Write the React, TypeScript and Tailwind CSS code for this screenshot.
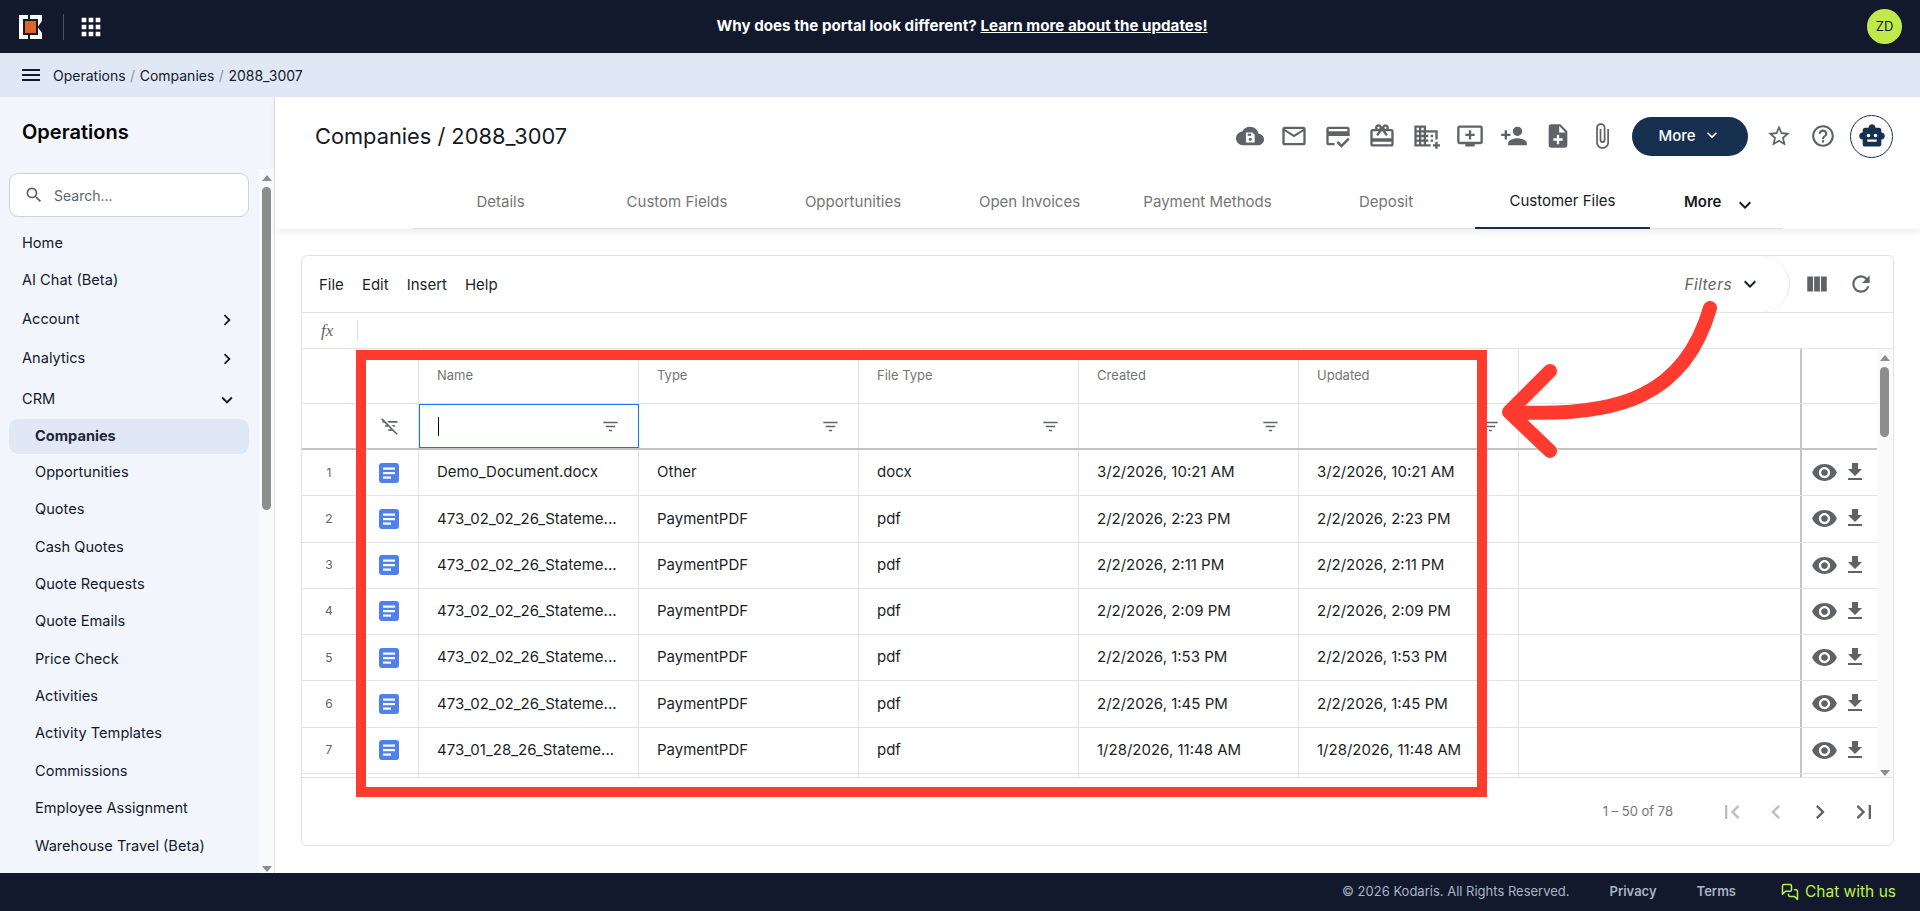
import React from "react";
import {
  MdApps,
  MdChevronLeft,
  MdChevronRight,
  MdExpandMore,
  MdFileDownload,
  MdFilterList,
  MdFilterListOff,
  MdFirstPage,
  MdHelpOutline,
  MdLastPage,
  MdMailOutline,
  MdMenu,
  MdNoteAdd,
  MdOutlineAddToQueue,
  MdOutlineAttachFile,
  MdOutlineCardGiftcard,
  MdOutlineCreditScore,
  MdOutlineDomainAdd,
  MdPersonAdd,
  MdRefresh,
  MdSearch,
  MdSmartToy,
  MdStarBorder,
  MdViewColumn,
  MdVisibility,
} from "react-icons/md";
import { LuMessagesSquare } from "react-icons/lu";

const navTop = ["Home", "AI Chat (Beta)"];
const navGroups = ["Account", "Analytics"];
const crmItems = [
  "Opportunities",
  "Quotes",
  "Cash Quotes",
  "Quote Requests",
  "Quote Emails",
  "Price Check",
  "Activities",
  "Activity Templates",
  "Commissions",
  "Employee Assignment",
  "Warehouse Travel (Beta)",
];

const tabs = [
  { label: "Details", width: "w-[177px]" },
  { label: "Custom Fields", width: "w-[176px]" },
  { label: "Opportunities", width: "w-[176px]" },
  { label: "Open Invoices", width: "w-[177px]" },
  { label: "Payment Methods", width: "w-[179px]" },
  { label: "Deposit", width: "w-[178px]" },
];

const files = [
  ["Demo_Document.docx", "Other", "docx", "3/2/2026, 10:21 AM"],
  ["473_02_02_26_Stateme...", "PaymentPDF", "pdf", "2/2/2026, 2:23 PM"],
  ["473_02_02_26_Stateme...", "PaymentPDF", "pdf", "2/2/2026, 2:11 PM"],
  ["473_02_02_26_Stateme...", "PaymentPDF", "pdf", "2/2/2026, 2:09 PM"],
  ["473_02_02_26_Stateme...", "PaymentPDF", "pdf", "2/2/2026, 1:53 PM"],
  ["473_02_02_26_Stateme...", "PaymentPDF", "pdf", "2/2/2026, 1:45 PM"],
  ["473_01_28_26_Stateme...", "PaymentPDF", "pdf", "1/28/2026, 11:48 AM"],
];

const Logo = () => (
  <svg width="24" height="24" viewBox="0 0 24 24">
    <path fill="#fff" d="M0 0h9v4H4v16h5v4H0z" />
    <path fill="#fff" d="M11 0h12v6l-4 5.5V4h-8z" />
    <path fill="#fff" d="M11 24h12v-6l-4-5.5V20h-8z" />
    <rect x="6" y="6" width="11" height="12" fill="#e0642a" />
  </svg>
);

const CloudSave = () => (
  <svg width="28" height="28" viewBox="0 0 24 24">
    <path
      fill="#5f6368"
      d="M19.35 10.04C18.67 6.59 15.64 4 12 4 9.11 4 6.6 5.64 5.35 8.04 2.34 8.36 0 10.91 0 14c0 3.31 2.69 6 6 6h13c2.76 0 5-2.24 5-5 0-2.64-2.05-4.78-4.65-4.96z"
    />
    <path fill="#fff" d="M8.5 9h5.5l2 2v6.5H8.5z" />
    <rect x="10" y="10" width="3" height="1.8" fill="#5f6368" />
    <circle cx="12.25" cy="14.7" r="1.3" fill="#5f6368" />
  </svg>
);

const DocIcon = () => (
  <svg width="20" height="20" viewBox="0 0 20 20">
    <rect width="20" height="20" rx="3" fill="#4f81ee" />
    <rect x="4" y="4.5" width="12" height="2.2" fill="#fff" />
    <rect x="4" y="9" width="12" height="2.2" fill="#fff" />
    <rect x="4" y="13.5" width="8" height="2.2" fill="#fff" />
  </svg>
);

const Scrollbar = ({ thumb }: { thumb: string }) => (
  <div className="w-[15px] shrink-0 flex flex-col items-center bg-[#fafafa] pt-[6px] pb-[1px]">
    <div className="w-0 h-0 border-x-[5px] border-x-transparent border-b-[6px] border-b-[#8d8d8d]" />
    <div className={`w-[9px] mt-[6px] rounded-full bg-[#8d8d8d] ${thumb}`} />
    <div className="flex-1" />
    <div className="w-0 h-0 border-x-[5px] border-x-transparent border-t-[6px] border-t-[#8d8d8d]" />
  </div>
);

const Sidebar = () => (
  <aside className="w-[275px] shrink-0 flex flex-col bg-[#f2f6fc] border-r border-[#e4e4e4] overflow-hidden">
    <div className="h-[72px] pl-[22px] pt-[20px] text-[20px] leading-[30px] font-semibold text-black">Operations</div>
    <div className="flex flex-1 min-h-0">
      <div className="w-[259px] shrink-0 overflow-hidden">
        <div className="ml-[9px] mr-[10px] mt-[4px] h-[44px] flex items-center rounded-[9px] border border-[#ccd1dc] bg-white pl-[14px] text-[14px] text-[#5c6470]">
          <MdSearch className="w-[20px] h-[20px] text-[#616161] mr-[10px]" />
          Search...
        </div>
        <nav className="mt-[8px] text-[14.6px] text-[#12192c]">
          {navTop.map((item) => (
            <div key={item} className="h-[37.5px] flex items-center pl-[22px]">
              {item}
            </div>
          ))}
          {navGroups.map((item) => (
            <div key={item} className="h-[39px] flex items-center justify-between pl-[22px] pr-[21px]">
              {item}
              <MdChevronRight className="w-[22px] h-[22px]" />
            </div>
          ))}
          <div className="h-[41px] pt-[2px] flex items-center justify-between pl-[22px] pr-[21px]">
            CRM
            <MdExpandMore className="w-[22px] h-[22px]" />
          </div>
          <div className="ml-[9px] mr-[10px] h-[35px] flex items-center rounded-[9px] bg-[#e1e8f5] pl-[26px] font-bold text-[#1e2638]">
            Companies
          </div>
          {crmItems.map((item) => (
            <div key={item} className="h-[37.4px] flex items-center pl-[35px] first:mt-[1px]">
              {item}
            </div>
          ))}
        </nav>
      </div>
      <Scrollbar thumb="h-[323px]" />
    </div>
  </aside>
);

const PageHeader = () => (
  <header className="h-[132px] shrink-0 shadow-[0_3px_6px_rgba(0,0,0,0.07)]">
    <div className="h-[78px] flex items-center pl-[40px] pr-[27px]">
      <h1 className="text-[21.8px] text-[#16191f]">Companies / 2088_3007</h1>
      <div className="ml-auto flex items-center text-[#5f6368]">
        <span className="w-[44px] flex justify-center"><CloudSave /></span>
        <span className="w-[44px] flex justify-center"><MdMailOutline className="w-[28px] h-[28px]" /></span>
        <span className="w-[44px] flex justify-center"><MdOutlineCreditScore className="w-[28px] h-[28px]" /></span>
        <span className="w-[44px] flex justify-center"><MdOutlineCardGiftcard className="w-[28px] h-[28px]" /></span>
        <span className="w-[44px] flex justify-center"><MdOutlineDomainAdd className="w-[28px] h-[28px]" /></span>
        <span className="w-[44px] flex justify-center"><MdOutlineAddToQueue className="w-[28px] h-[28px]" /></span>
        <span className="w-[44px] flex justify-center"><MdPersonAdd className="w-[28px] h-[28px]" /></span>
        <span className="w-[44px] flex justify-center"><MdNoteAdd className="w-[28px] h-[28px]" /></span>
        <span className="w-[44px] flex justify-center"><MdOutlineAttachFile className="w-[28px] h-[28px]" /></span>
        <button className="ml-[8px] w-[116px] h-[39px] flex items-center justify-center rounded-full bg-[#17304f] text-white text-[15px] font-medium">
          More
          <MdExpandMore className="w-[20px] h-[20px] ml-[6px] -mt-[3px]" />
        </button>
        <MdStarBorder className="ml-[18px] w-[26px] h-[26px]" />
        <MdHelpOutline className="ml-[18px] w-[26px] h-[26px]" />
        <span className="ml-[14px] w-[43px] h-[43px] flex items-center justify-center rounded-full border border-[#17304f] text-[#17304f]">
          <MdSmartToy className="w-[28px] h-[28px]" />
        </span>
      </div>
    </div>
    <div className="ml-[137px] w-[1371px] h-[54px] flex border-b border-[#e0e0e0] text-[15px]">
      {tabs.map((tab) => (
        <div key={tab.label} className={`${tab.width} flex items-center justify-center pt-[1px] text-[#757575]`}>
          {tab.label}
        </div>
      ))}
      <div className="w-[175px] h-[54px] flex items-center justify-center pt-[1px] text-[#17191f] border-b-2 border-[#17304f]">
        Customer Files
      </div>
      <div className="flex items-center pl-[34px] pt-[1px] font-semibold text-[#17191f]">
        More
        <MdExpandMore className="w-[24px] h-[24px] ml-[12px] mt-[6px]" />
      </div>
    </div>
  </header>
);

const cellBase = "flex items-center shrink-0 border-r border-[#e3e3e3]";
const dataCols = ["Name", "Type", "File Type", "Created", "Updated"];

const HeaderRow = () => (
  <div className="flex h-[55px] shrink-0 border-b border-[#e3e3e3] text-[13px] text-[#757575]">
    <div className={`${cellBase} w-[55px]`} />
    <div className={`${cellBase} w-[62px]`} />
    {dataCols.map((col) => (
      <div key={col} className={`${cellBase} w-[220px] pl-[18px]`}>
        {col}
      </div>
    ))}
    <div className={`${cellBase} w-[283px] border-r-2 border-r-[#c4c4c4]`} />
    <div className="w-[75px] shrink-0" />
  </div>
);

const FilterRow = () => (
  <div className="flex h-[46px] shrink-0 border-b-2 border-[#c4c4c4] text-[#5f6368]">
    <div className={`${cellBase} w-[55px]`} />
    <div className={`${cellBase} w-[62px] justify-center pl-[4px]`}>
      <MdFilterListOff className="w-[20px] h-[20px]" />
    </div>
    {dataCols.map((col, i) => (
      <div
        key={col}
        className={
          i === 0
            ? "flex items-center shrink-0 w-[220px] pl-[18px] pr-[18px] border border-[#1a73e8] justify-between"
            : `${cellBase} w-[220px] pr-[18px] justify-end`
        }
      >
        {i === 0 && <span className="w-px h-[19px] bg-black" />}
        <MdFilterList className="w-[19px] h-[19px]" />
      </div>
    ))}
    <div className={`${cellBase} w-[283px] border-r-2 border-r-[#c4c4c4]`} />
    <div className="w-[75px] shrink-0" />
  </div>
);

const FileRow = ({ row, index }: { row: string[]; index: number | string }) => (
  <div className="flex h-[46.25px] shrink-0 border-b border-[#e3e3e3] text-[15px] text-[#1c1f26]">
    <div className={`${cellBase} w-[55px] justify-center text-[12px] text-[#616161]`}>{index}</div>
    <div className={`${cellBase} w-[62px] justify-center pl-[2px]`}>
      <DocIcon />
    </div>
    <div className={`${cellBase} w-[220px] pl-[18px]`}>{row[0]}</div>
    <div className={`${cellBase} w-[220px] pl-[18px]`}>{row[1]}</div>
    <div className={`${cellBase} w-[220px] pl-[18px]`}>{row[2]}</div>
    <div className={`${cellBase} w-[220px] pl-[18px]`}>{row[3]}</div>
    <div className={`${cellBase} w-[220px] pl-[18px]`}>{row[3]}</div>
    <div className={`${cellBase} w-[283px] border-r-2 border-r-[#c4c4c4]`} />
    <div className="w-[75px] shrink-0 flex items-center pl-[9px] text-[#5f6368]">
      <MdVisibility className="w-[27px] h-[27px]" />
      <MdFileDownload className="w-[24px] h-[24px] ml-[5px] -mt-[1px]" />
    </div>
  </div>
);

const FilesGrid = () => (
  <section className="flex-1 min-h-0 flex flex-col rounded-[6px] border border-[#e3e3e3] bg-white overflow-hidden">
    <div className="h-[57px] shrink-0 flex items-center border-b border-[#e3e3e3] text-[15px] text-[#1c1f26]">
      <div className="flex gap-[18px] pl-[17px] pt-[3px] shrink-0">
        <span>File</span>
        <span>Edit</span>
        <span>Insert</span>
        <span>Help</span>
      </div>
      <div className="flex-1 h-full flex items-center justify-end pr-[27px] rounded-r-[40px] border-r border-[#e6e6e6]">
        <span className="italic text-[15.5px] tracking-[0.4px] pt-[2px] text-[#5f6368]">Filters</span>
        <MdExpandMore className="w-[24px] h-[24px] ml-[6px] text-[#1c1f26]" />
      </div>
      <div className="w-[103px] shrink-0 flex items-center pl-[14px] text-[#5f6368]">
        <MdViewColumn className="w-[26px] h-[26px]" />
        <MdRefresh className="w-[26px] h-[26px] ml-[18px]" />
      </div>
    </div>
    <div className="h-[36px] shrink-0 flex items-center border-b border-[#e3e3e3]">
      <span className="w-[55px] pl-[19px] font-['Liberation_Serif',serif] italic text-[17px] text-[#5f6368]">fx</span>
      <span className="w-px h-[21px] bg-[#e0e0e0]" />
    </div>
    <div className="h-[428px] shrink-0 flex overflow-hidden">
      <div className="w-[1575px] shrink-0 flex flex-col overflow-hidden">
        <HeaderRow />
        <FilterRow />
        {files.map((row, i) => (
          <FileRow key={i} row={row} index={i + 1} />
        ))}
        <FileRow row={["", "", "", ""]} index="" />
      </div>
      <Scrollbar thumb="h-[70px]" />
    </div>
    <div className="flex-1 flex items-center justify-end border-t border-[#e3e3e3] pr-[15px] text-[#5f6368]">
      <span className="mr-[45px] text-[13px] text-[#757575]">1 – 50 of 78</span>
      <MdFirstPage className="w-[28px] h-[28px] text-[#bdbdbd]" />
      <MdChevronLeft className="ml-[16px] w-[28px] h-[28px] text-[#bdbdbd]" />
      <MdChevronRight className="ml-[16px] w-[28px] h-[28px]" />
      <MdLastPage className="ml-[16px] w-[28px] h-[28px]" />
    </div>
  </section>
);

const App: React.FC = () => {
  return (
    <div className="relative w-full h-screen flex flex-col overflow-hidden bg-white font-[Inter,sans-serif]">
      <div className="h-[53px] shrink-0 flex items-center bg-[#12192c] text-white">
        <div className="w-[300px] shrink-0 flex items-center pl-[19px]">
          <Logo />
          <span className="ml-[20px] w-px h-[26px] bg-[#4a5266]" />
          <MdApps className="ml-[13px] w-[28px] h-[28px]" />
        </div>
        <div className="flex-1 text-center text-[15.2px] font-bold pl-[4px]">
          Why does the portal look different? <span className="underline">Learn more about the updates!</span>
        </div>
        <div className="w-[300px] shrink-0 flex justify-end pr-[18px]">
          <span className="w-[35px] h-[35px] flex items-center justify-center rounded-full bg-[#c0ea4a] text-[13px] text-[#12192c]">
            ZD
          </span>
        </div>
      </div>

      <div className="h-[44px] shrink-0 flex items-center bg-[#e1e8f5] pl-[19px] text-[14px] text-[#12192c]">
        <MdMenu className="w-[24px] h-[24px] mr-[10px]" />
        <span>Operations</span>
        <span className="mx-[4.5px] text-[#8b93a3]">/</span>
        <span>Companies</span>
        <span className="mx-[4.5px] text-[#8b93a3]">/</span>
        <span>2088_3007</span>
      </div>

      <div className="flex-1 min-h-0 flex">
        <Sidebar />
        <main className="flex-1 min-w-0 flex flex-col">
          <PageHeader />
          <div className="flex-1 min-h-0 flex flex-col pt-[26px] pb-[27px] pl-[26px] pr-[26px]">
            <FilesGrid />
          </div>
        </main>
      </div>

      <footer className="h-[38px] shrink-0 flex items-center justify-end bg-[#12192c] pr-[24px] text-[13px] text-[#a9b4c8]">
        <span>© 2026 Kodaris. All Rights Reserved.</span>
        <span className="ml-[40px] font-semibold">Privacy</span>
        <span className="ml-[40px] font-semibold">Terms</span>
        <LuMessagesSquare className="ml-[45px] w-[18px] h-[18px] text-[#bef04a]" />
        <span className="ml-[6px] text-[15.5px] text-[#bef04a]">Chat with us</span>
      </footer>

      {/* red annotation drawn over the grid */}
      <div className="absolute left-[356px] top-[350px] w-[1131px] h-[447px] border-[10px] border-[#ff3b2f] pointer-events-none" />
      <svg className="absolute left-0 top-0 pointer-events-none" width="1920" height="911" viewBox="0 0 1920 911" fill="none">
        <path
          d="M1710 308C1685 395 1620 418 1512 412M1550 371L1509 412L1550 451"
          stroke="#ff3b2f"
          strokeWidth="14"
          strokeLinecap="round"
          strokeLinejoin="round"
        />
      </svg>
    </div>
  );
};

export default App;
